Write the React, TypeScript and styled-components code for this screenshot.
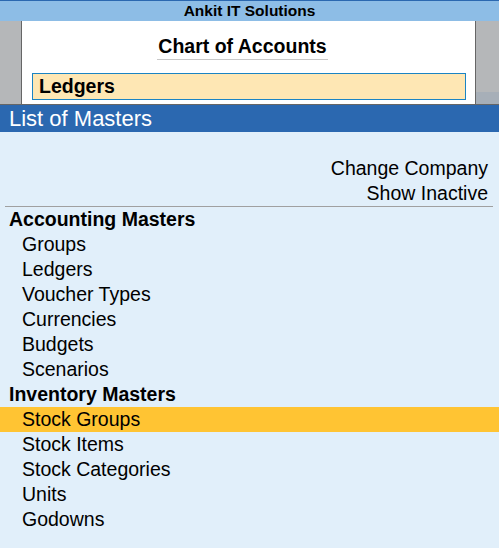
import React from "react";
import styled, { createGlobalStyle } from "styled-components";

const GlobalStyle = createGlobalStyle`
    html, body {
        margin: 0;
        padding: 0;
        background: #e1effa;
        font-family: "Liberation Sans", Arial, sans-serif;
        color: #000;
    }
`;

const Page = styled.div`
    width: 499px;
    min-height: 548px;
    display: flex;
    flex-direction: column;
`;

const TitleBar = styled.div`
    height: 20px;
    border-top: 1px solid #2b68b0;
    background: #8dbde6;
    text-align: center;
    font-size: 15.5px;
    font-weight: bold;
    line-height: 20px;
`;

const WindowRow = styled.div`
    display: flex;
    height: 83px;
    border-bottom: 1px solid #666;
`;

const SideLeft = styled.div`
    width: 21px;
    background: #b5b7b9;
`;

const SideRight = styled.div`
    flex: 1;
    background: linear-gradient(#b5b7b9 0 71px, #a7afb8 71px 100%);
`;

const Panel = styled.div`
    width: 453px;
    background: #fff;
    border-left: 1px solid #666;
    border-right: 1px solid #666;
    display: flex;
    flex-direction: column;
    align-items: center;
`;

const PanelTitle = styled.div`
    margin: 14px 12px 0 0;
    padding: 0 1px 2px;
    border-bottom: 1px solid #c8c8c8;
    font-size: 19.5px;
    font-weight: bold;
    line-height: 22px;
`;

const InputBox = styled.div`
    align-self: flex-start;
    margin: 13px 0 0 10px;
    width: 426px;
    height: 25px;
    padding-left: 6px;
    border: 1px solid #1b84c4;
    background: #fee7b4;
    font-size: 19.5px;
    font-weight: bold;
    line-height: 25px;
`;

const ListBar = styled.div`
    height: 27px;
    padding-left: 9px;
    background: #2b68b0;
    color: #fff;
    font-size: 22px;
    line-height: 27px;
`;

const Options = styled.div`
    padding-top: 24px;
    margin: 0 6px 0 5px;
    border-bottom: 1px solid #a0a0a0;
    display: flex;
    flex-direction: column;
    align-items: flex-end;
`;

const OptionRow = styled.div`
    height: 25px;
    padding-right: 5px;
    font-size: 19.5px;
    line-height: 25px;
`;

const MenuList = styled.div`
    display: flex;
    flex-direction: column;
`;

const SectionTitle = styled.div`
    height: 25px;
    padding-left: 9px;
    font-size: 19.5px;
    font-weight: bold;
    line-height: 25px;
`;

const MenuItem = styled.div<{ $active?: boolean }>`
    height: 25px;
    padding-left: 22px;
    font-size: 19.5px;
    line-height: 25px;
    background: ${(p) => (p.$active ? "#ffc433" : "transparent")};
`;

const sections = [
    {
        title: "Accounting Masters",
        items: ["Groups", "Ledgers", "Voucher Types", "Currencies", "Budgets", "Scenarios"],
    },
    {
        title: "Inventory Masters",
        items: ["Stock Groups", "Stock Items", "Stock Categories", "Units", "Godowns"],
    },
];

const App: React.FC = () => {
    const active = "Stock Groups";
    return (
        <Page>
            <GlobalStyle />
            <TitleBar>Ankit IT Solutions</TitleBar>
            <WindowRow>
                <SideLeft />
                <Panel>
                    <PanelTitle>Chart of Accounts</PanelTitle>
                    <InputBox>Ledgers</InputBox>
                </Panel>
                <SideRight />
            </WindowRow>
            <ListBar>List of Masters</ListBar>
            <Options>
                <OptionRow>Change Company</OptionRow>
                <OptionRow>Show Inactive</OptionRow>
            </Options>
            <MenuList>
                {sections.map((s) => (
                    <React.Fragment key={s.title}>
                        <SectionTitle>{s.title}</SectionTitle>
                        {s.items.map((item) => (
                            <MenuItem key={item} $active={item === active}>
                                {item}
                            </MenuItem>
                        ))}
                    </React.Fragment>
                ))}
            </MenuList>
        </Page>
    );
};

export default App;
